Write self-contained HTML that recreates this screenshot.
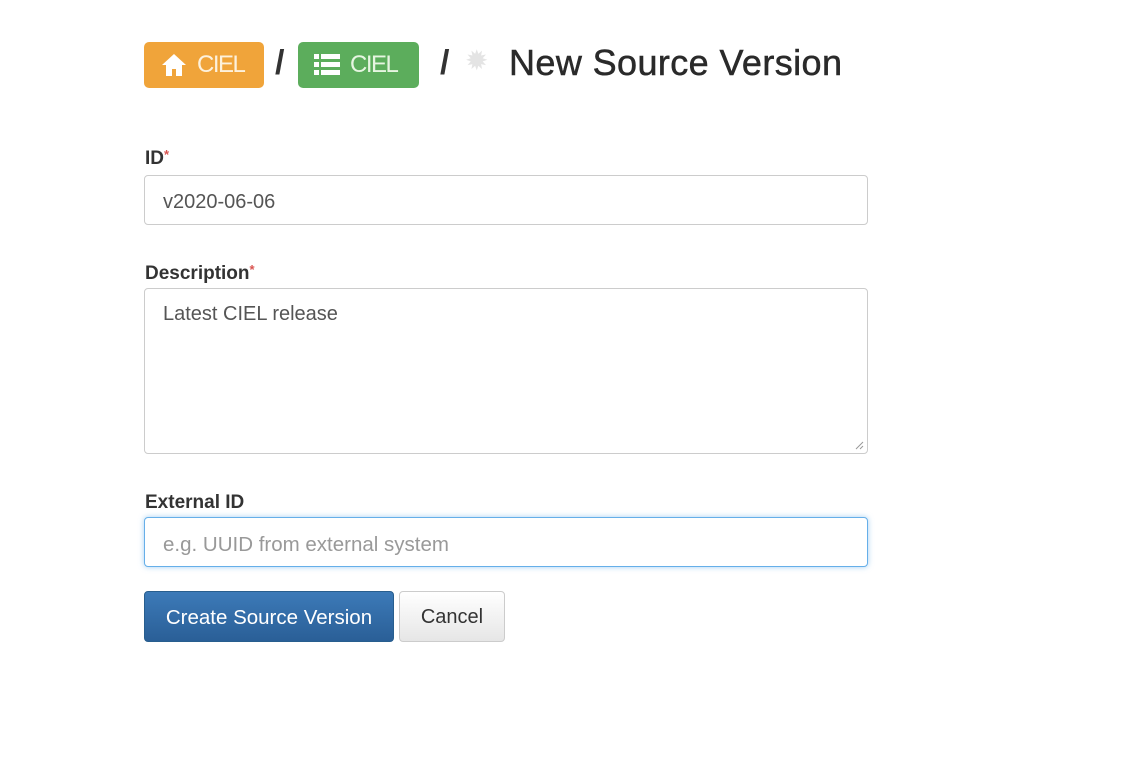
<!DOCTYPE html>
<html><head><meta charset="utf-8"><style>
body{margin:0;width:1126px;height:768px;background:#fff;font-family:"Liberation Sans",Arial,sans-serif;color:#333;position:relative;overflow:hidden}
.abs{position:absolute}
.badge{height:46px;border-radius:5px;color:#fdf1dc;font-size:24px;display:flex;align-items:center;letter-spacing:-1.5px}
.lbl{font-weight:bold;font-size:19px;color:#333}
.lbl span{color:#d9534f;font-size:13px;vertical-align:top;position:relative;top:-1px}
.inp{border:1px solid #ccc;border-radius:4px;box-sizing:border-box;font-size:20px;color:#555;padding-left:18px;background:#fff}
</style></head><body>
<div class="abs badge" style="left:144px;top:42px;width:120px;background:#f0a43a">
 <svg style="margin-left:17px" width="26" height="24" viewBox="0 0 26 24"><path d="M13 1 L1 12 H5 V23 H11 V16 H15 V23 H21 V12 H25 Z" fill="#fff"/></svg>
 <span style="margin-left:10px">CIEL</span></div>
<div class="abs" style="left:275px;top:44px;font-size:34px;color:#333;font-weight:bold">/</div>
<div class="abs badge" style="left:298px;top:42px;width:121px;background:#5cad5c;color:#e6f5e1">
 <svg style="margin-left:16px" width="26" height="24" viewBox="0 0 26 24" fill="#fff"><rect x="0" y="1" width="5" height="5"/><rect x="7" y="1" width="19" height="5"/><rect x="0" y="9" width="5" height="5"/><rect x="7" y="9" width="19" height="5"/><rect x="0" y="17" width="5" height="5"/><rect x="7" y="17" width="19" height="5"/></svg>
 <span style="margin-left:10px">CIEL</span></div>
<div class="abs" style="left:440px;top:44px;font-size:34px;color:#333;font-weight:bold">/</div>
<div class="abs" style="left:465px;top:44px;font-size:28px;color:#e4e4e4">✹</div>
<div class="abs" style="left:509px;top:42px;font-size:36px;color:#2a2a2a;letter-spacing:0.4px;-webkit-text-stroke:0.5px #2a2a2a">New Source Version</div>

<div class="abs lbl" style="left:145px;top:148px">ID<span>*</span></div>
<div class="abs inp" style="left:144px;top:175px;width:724px;height:50px;line-height:52px">v2020-06-06</div>

<div class="abs lbl" style="left:145px;top:263px">Description<span>*</span></div>
<div class="abs inp" style="left:144px;top:288px;width:724px;height:166px;padding-top:14px;line-height:22px">Latest CIEL release
<svg class="abs" style="right:3px;bottom:3px" width="10" height="10"><path d="M9 2 L2 9 M9 6 L6 9" stroke="#999" stroke-width="1"/></svg></div>

<div class="abs lbl" style="left:145px;top:492px">External ID</div>
<div class="abs inp" style="left:144px;top:517px;width:724px;height:50px;line-height:54px;border:1px solid #66afe9;box-shadow:0 0 6px rgba(102,175,233,.6);color:#999;font-size:20.5px">e.g. UUID from external system</div>

<div class="abs" style="left:144px;top:591px;width:250px;height:51px;border-radius:4px;background:linear-gradient(#3c7ab8,#2a5f97);border:1px solid #285e8e;box-sizing:border-box;color:#fff;font-size:20.5px;text-align:center;line-height:51px">Create Source Version</div>
<div class="abs" style="left:399px;top:591px;width:106px;height:51px;border-radius:4px;background:linear-gradient(#fff,#e6e6e6);border:1px solid #ccc;box-sizing:border-box;color:#333;font-size:20px;text-align:center;line-height:51px">Cancel</div>
</body></html>
